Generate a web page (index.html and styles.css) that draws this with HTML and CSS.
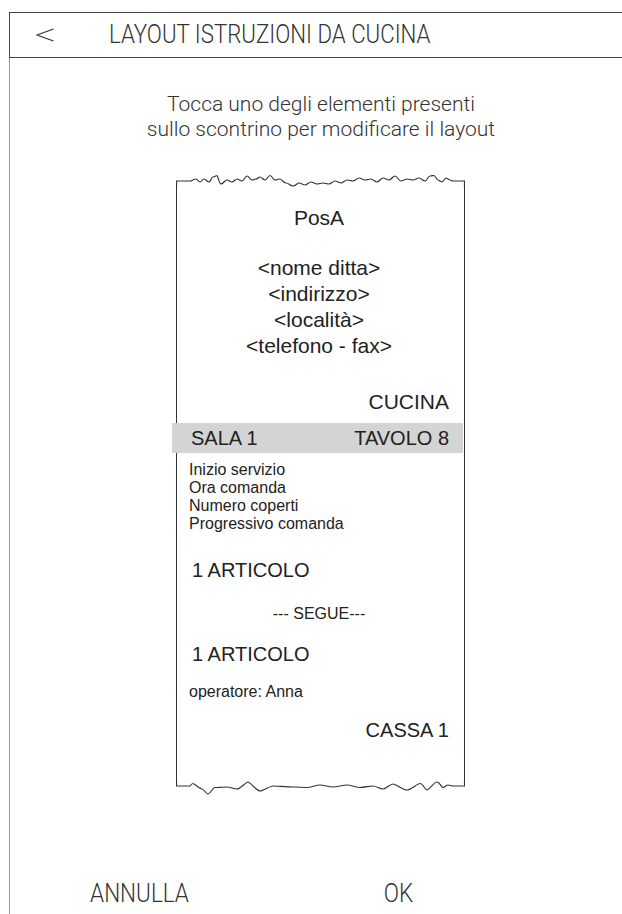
FILE: index.html
```html
<!DOCTYPE html>
<html lang="it">

<head>
    <meta charset="UTF-8">
    <meta name="viewport" content="width=device-width, initial-scale=1.0">
    <title>Layout istruzioni da cucina</title>
    <link rel="stylesheet" href="styles.css">
</head>

<body>
    <div class="screen">
        <!-- Header -->
        <div class="header">
            <svg class="back" width="18" height="14" viewBox="0 0 18 14">
                <polyline points="17.5,1 1,7 17.5,13" />
            </svg>
            <span class="title">LAYOUT ISTRUZIONI DA CUCINA</span>
        </div>

        <div class="content">
            <p class="hint">Tocca uno degli elementi presenti<br>sullo scontrino per modificare il layout</p>

            <!-- Receipt preview -->
            <div class="receipt">
                <svg class="edge" width="289" height="14" viewBox="0 0 289 14">
                    <path d="M0.5 14 V7 H15 S18 5 20 5 S22 8 24 8 S26 5 28 5 S31 8 33 8 S35 3 37 3 S40 1.5 41 1.5 S43 10 45 10 S49 6 51 6 S54 8 56 8 S59 5 61 5 S64 7 66 7 S69 2 71 2 S74 6 76 6 S78 5 80 5 S82 3 84 3 S87 6 89 6 S92 1.5 94 1.5 S97 6 99 6 S102 5 104 5 S107 9 110 9 S114 12 117 12 S121 9 123 9 S127 11 129 11 S133 8 135 8 S139 10 141 10 S145 9 147 9 S151 10 153 10 S157 7 159 7 S163 9 165 9 S169 6 171 6 S175 7 177 7 S181 4 183 4 S187 6 189 6 S193 5 195 5 S199 8 201 8 S205 4 207 4 S211 6 213 6 S217 2 219 2 S223 7 225 7 S229 5 231 5 S235 6 237 6 S241 4 243 4 S247 7 249 7 S252 2 254 2 S257 1.5 258 1.5 S261 6 262 6 S265 8 266 8 S269 4 270 4 S273 6 274 6 S276 7 277 7 H288.5 V14" />
                </svg>
                <div class="receipt-body">
                    <div class="r-title">PosA</div>
                    <div class="r-company">
                        &lt;nome ditta&gt;<br>
                        &lt;indirizzo&gt;<br>
                        &lt;località&gt;<br>
                        &lt;telefono - fax&gt;
                    </div>
                    <div class="r-right r-dest">CUCINA</div>
                    <div class="r-band">
                        <span>SALA 1</span>
                        <span>TAVOLO 8</span>
                    </div>
                    <div class="r-info">
                        Inizio servizio<br>
                        Ora comanda<br>
                        Numero coperti<br>
                        Progressivo comanda
                    </div>
                    <div class="r-item">1 ARTICOLO</div>
                    <div class="r-follow">--- SEGUE---</div>
                    <div class="r-item r-item-2">1 ARTICOLO</div>
                    <div class="r-operator">operatore: Anna</div>
                    <div class="r-right r-cash">CASSA 1</div>
                </div>
                <svg class="edge" width="289" height="14" viewBox="0 0 289 14">
                    <path d="M0.5 0 V5 H14 S16 2.5 17 2.5 S24 8 26 8 S30 13 32 13 S37 6.5 39 6.5 S48 6 51 6 S58 8 61 8 S70 1 72 1 S81 10 84 10 S94 5 97 5 S112 6 117 6 S127 6.5 131 6.5 S140 4 144 4 S153 6 157 6 S167 4 171 4 S180 6.5 184 6.5 S194 5 197 5 S204 8 207 8 S214 3 217 3 S227 9 231 9 S241 2.5 244 2.5 S249 9 251 9 S258 1 261 1 S265 6.5 267 6.5 S270 4 272 4 S275 5 277 5 H288.5 V0" />
                </svg>
            </div>
        </div>

        <!-- Footer buttons -->
        <div class="actions">
            <span class="action">ANNULLA</span>
            <span class="action">OK</span>
        </div>
    </div>
</body>

</html>
```

FILE: styles.css
```css
html,
body {
    margin: 0;
    padding: 0;
    background-color: #fff;
    overflow: hidden;
}

body {
    font-family: 'Roboto', sans-serif;
    font-weight: 300;
    color: #333;
}

.screen {
    margin: 12px 0 0 9px;
    width: 622px;
    height: 902px;
    border-left: 1px solid #999;
}

.header {
    display: flex;
    align-items: center;
    height: 44px;
    margin-left: -1px;
    padding-left: 26px;
    border-top: 1px solid #444;
    border-bottom: 1px solid #444;
    border-left: 1px solid #444;
    font-size: 25px;
    line-height: 44px;
}

.back {
    display: block;
    margin-right: 55px;
}

.back polyline {
    fill: none;
    stroke: #333;
    stroke-width: 1.2;
}

/* the title uses a condensed face: squeeze the light Roboto to match */
.title {
    display: inline-block;
    transform: scaleX(0.89);
    transform-origin: left center;
    white-space: nowrap;
}

.hint {
    margin: 34px 0 0;
    text-align: center;
    font-size: 21px;
    line-height: 25px;
}

/* Receipt */
.receipt {
    width: 289px;
    margin: 32px 0 0 166px;
    font-family: 'Liberation Sans', Arial, sans-serif;
    font-weight: 400;
    color: #222;
}

.edge {
    display: block;
}

.edge path {
    fill: none;
    stroke: #333;
    stroke-width: 1.2;
    stroke-linejoin: round;
}

.receipt-body {
    border-left: 1px solid #333;
    border-right: 1px solid #333;
    padding: 18px 15px 39px 12px;
}

.r-title {
    text-align: center;
    font-size: 21px;
    line-height: 24px;
}

.r-company {
    margin-top: 25px;
    text-align: center;
    font-size: 21px;
    line-height: 26px;
}

.r-right {
    text-align: right;
}

.r-dest {
    margin-top: 31px;
    font-size: 21px;
    line-height: 24px;
}

.r-band {
    display: flex;
    justify-content: space-between;
    margin: 9px -14px 0 -17px;
    padding: 0 14px 0 19px;
    height: 30px;
    background-color: #d4d4d4;
    font-size: 20px;
    line-height: 30px;
}

.r-info {
    margin-top: 8px;
    font-size: 16px;
    line-height: 18px;
}

.r-item {
    margin: 25px 0 0 3px;
    font-size: 20px;
    line-height: 24px;
}

.r-item-2 {
    margin-top: 18px;
}

.r-follow {
    margin-top: 22px;
    text-align: center;
    font-size: 16px;
    line-height: 20px;
}

.r-operator {
    margin-top: 17px;
    font-size: 16px;
    line-height: 18px;
}

.r-cash {
    margin-top: 17px;
    font-size: 20px;
    line-height: 24px;
}

/* Footer */
.actions {
    display: flex;
    margin-top: 77px;
    font-size: 25px;
    line-height: 44px;
}

.action {
    width: 259px;
    text-align: center;
    transform: scaleX(0.9);
}
```
